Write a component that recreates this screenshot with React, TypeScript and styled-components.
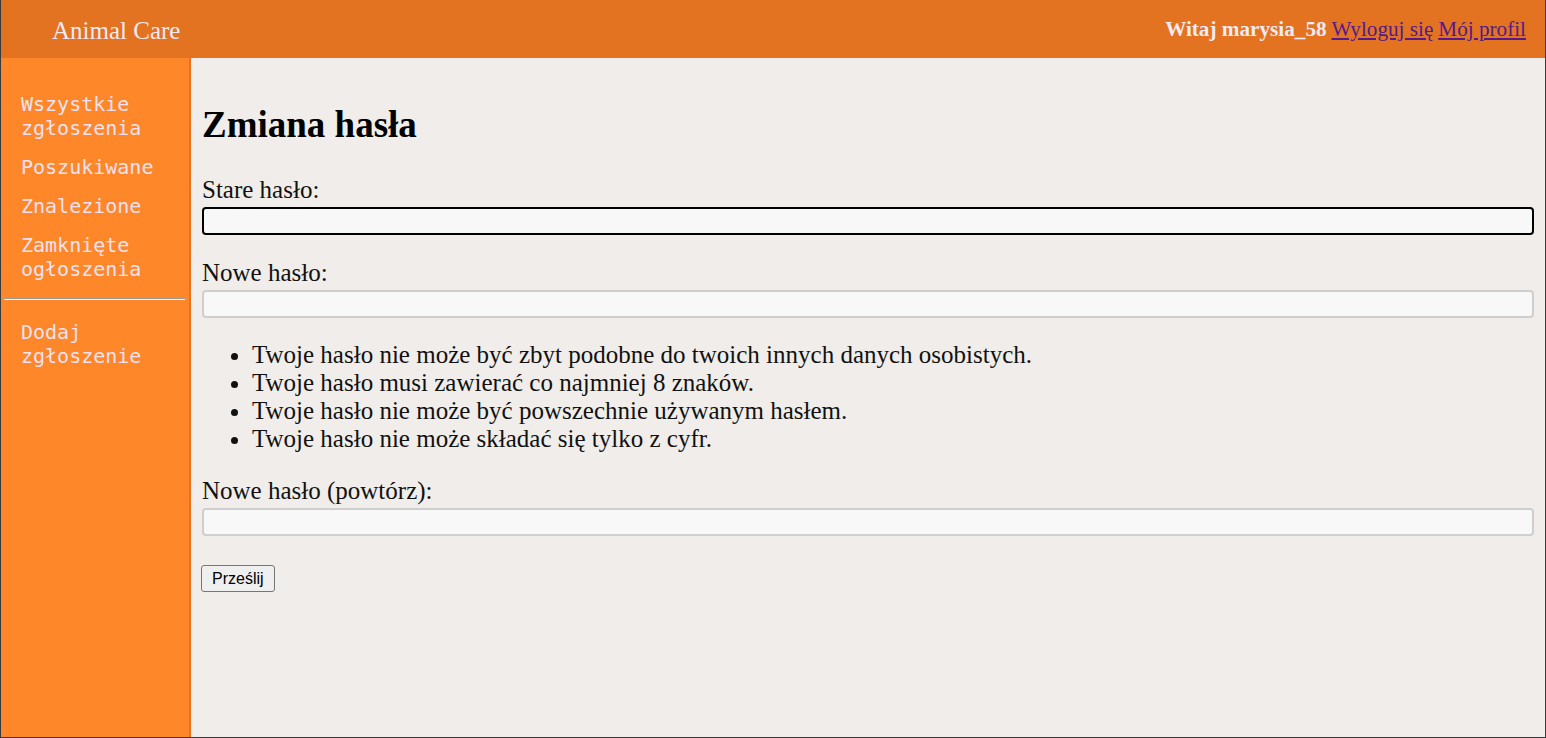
import styled, { createGlobalStyle } from 'styled-components'
import { JSX } from 'react'

// --- Global ---
const GlobalStyle = createGlobalStyle`
  html, body {
    margin: 0;
    padding: 0;
    height: 100%;
  }
  body {
    font-family: 'Liberation Serif', 'Times New Roman', serif;
    background: #f0edea;
  }
  #root {
    height: 100%;
  }
`

// --- Layout ---
const Page = styled.div`
  box-sizing: border-box;
  height: 100vh;
  display: flex;
  flex-direction: column;
  border: 1px solid #3a3a3a;
  border-top: none;
  background: #f0edea;
`

const Header = styled.header`
  flex: 0 0 58px;
  display: flex;
  align-items: center;
  justify-content: space-between;
  padding: 0 19px 0 51px;
  background-color: #e37320;
`

const Brand = styled.div`
  font-size: 25px;
  color: #f4eaf2;
  padding-top: 3px;
`

const UserBar = styled.div`
  font-size: 21.2px;
  color: #f4eaf2;
  display: flex;
  gap: 5px;
  align-items: baseline;

  b {
    font-weight: bold;
  }

  a {
    color: #551a8b;
    text-decoration: underline;
  }
`

const Body = styled.div`
  flex: 1;
  display: flex;
  min-height: 0;
`

const Sidebar = styled.nav`
  flex: 0 0 188px;
  background-color: #fe8829;
  border-right: 2px solid #e5721e;
  padding-top: 34px;
  display: flex;
  flex-direction: column;
`

const NavList = styled.div`
  display: flex;
  flex-direction: column;
  gap: 15px;
`

const NavItem = styled.a`
  display: block;
  padding: 0 12px 0 20px;
  font-family: 'DejaVu Sans Mono', 'Liberation Mono', monospace;
  font-size: 20px;
  line-height: 24px;
  color: #f4e1f1;
  text-decoration: none;
  cursor: pointer;
`

const Divider = styled.hr`
  margin: 17px 4px 20px 3px;
  height: 0;
  border: none;
  border-top: 1px solid #9a9a9a;
  border-bottom: 1px solid #f2f2f2;
`

const Main = styled.main`
  flex: 1;
  padding: 20px 11px;
  color: #000;
`

const Title = styled.h1`
  margin: 25px 0 30px;
  font-size: 37px;
  font-weight: bold;
`

const Form = styled.form`
  display: flex;
  flex-direction: column;
`

const Field = styled.div<{ $gap?: number }>`
  display: flex;
  flex-direction: column;
  margin-bottom: ${(p) => p.$gap ?? 24}px;
`

const Label = styled.label`
  font-size: 25px;
  line-height: 28px;
  color: #111;
`

const Input = styled.input<{ $focused?: boolean }>`
  box-sizing: border-box;
  margin-top: 3px;
  height: 28px;
  width: 100%;
  padding: 0 2px;
  background: #f8f8f8;
  border: 2px solid ${(p) => (p.$focused ? '#000' : '#cfcfcf')};
  border-radius: 4px;
  font-size: 16px;
  outline: none;
`

const Rules = styled.ul`
  margin: 0 0 24px;
  padding-left: 50px;
  font-size: 25px;
  line-height: 28px;
  color: #111;
`

const SubmitButton = styled.button`
  align-self: flex-start;
  margin-left: -1px;
  padding: 3px 10px;
  font-family: 'Liberation Sans', Arial, sans-serif;
  font-size: 16px;
  line-height: 19px;
  background: #efefef;
  border: 1px solid #767676;
  border-radius: 3px;
  color: #000;
  cursor: pointer;
`

// --- Data ---
const navItems = ['Wszystkie zgłoszenia', 'Poszukiwane', 'Znalezione', 'Zamknięte ogłoszenia']

const rules = [
  'Twoje hasło nie może być zbyt podobne do twoich innych danych osobistych.',
  'Twoje hasło musi zawierać co najmniej 8 znaków.',
  'Twoje hasło nie może być powszechnie używanym hasłem.',
  'Twoje hasło nie może składać się tylko z cyfr.'
]

export default function App(): JSX.Element {
  return (
    <>
      <GlobalStyle />
      <Page>
        <Header>
          <Brand>Animal Care</Brand>
          <UserBar>
            <b>Witaj marysia_58</b>
            <a href="#">Wyloguj się</a>
            <a href="#">Mój profil</a>
          </UserBar>
        </Header>
        <Body>
          <Sidebar>
            <NavList>
              {navItems.map((item) => (
                <NavItem key={item}>{item}</NavItem>
              ))}
            </NavList>
            <Divider />
            <NavItem>Dodaj zgłoszenie</NavItem>
          </Sidebar>
          <Main>
            <Title>Zmiana hasła</Title>
            <Form onSubmit={(e) => e.preventDefault()}>
              <Field>
                <Label htmlFor="old">Stare hasło:</Label>
                <Input id="old" type="password" $focused autoFocus />
              </Field>
              <Field $gap={23}>
                <Label htmlFor="new1">Nowe hasło:</Label>
                <Input id="new1" type="password" />
              </Field>
              <Rules>
                {rules.map((r) => (
                  <li key={r}>{r}</li>
                ))}
              </Rules>
              <Field $gap={29}>
                <Label htmlFor="new2">Nowe hasło (powtórz):</Label>
                <Input id="new2" type="password" />
              </Field>
              <SubmitButton type="submit">Prześlij</SubmitButton>
            </Form>
          </Main>
        </Body>
      </Page>
    </>
  )
}
